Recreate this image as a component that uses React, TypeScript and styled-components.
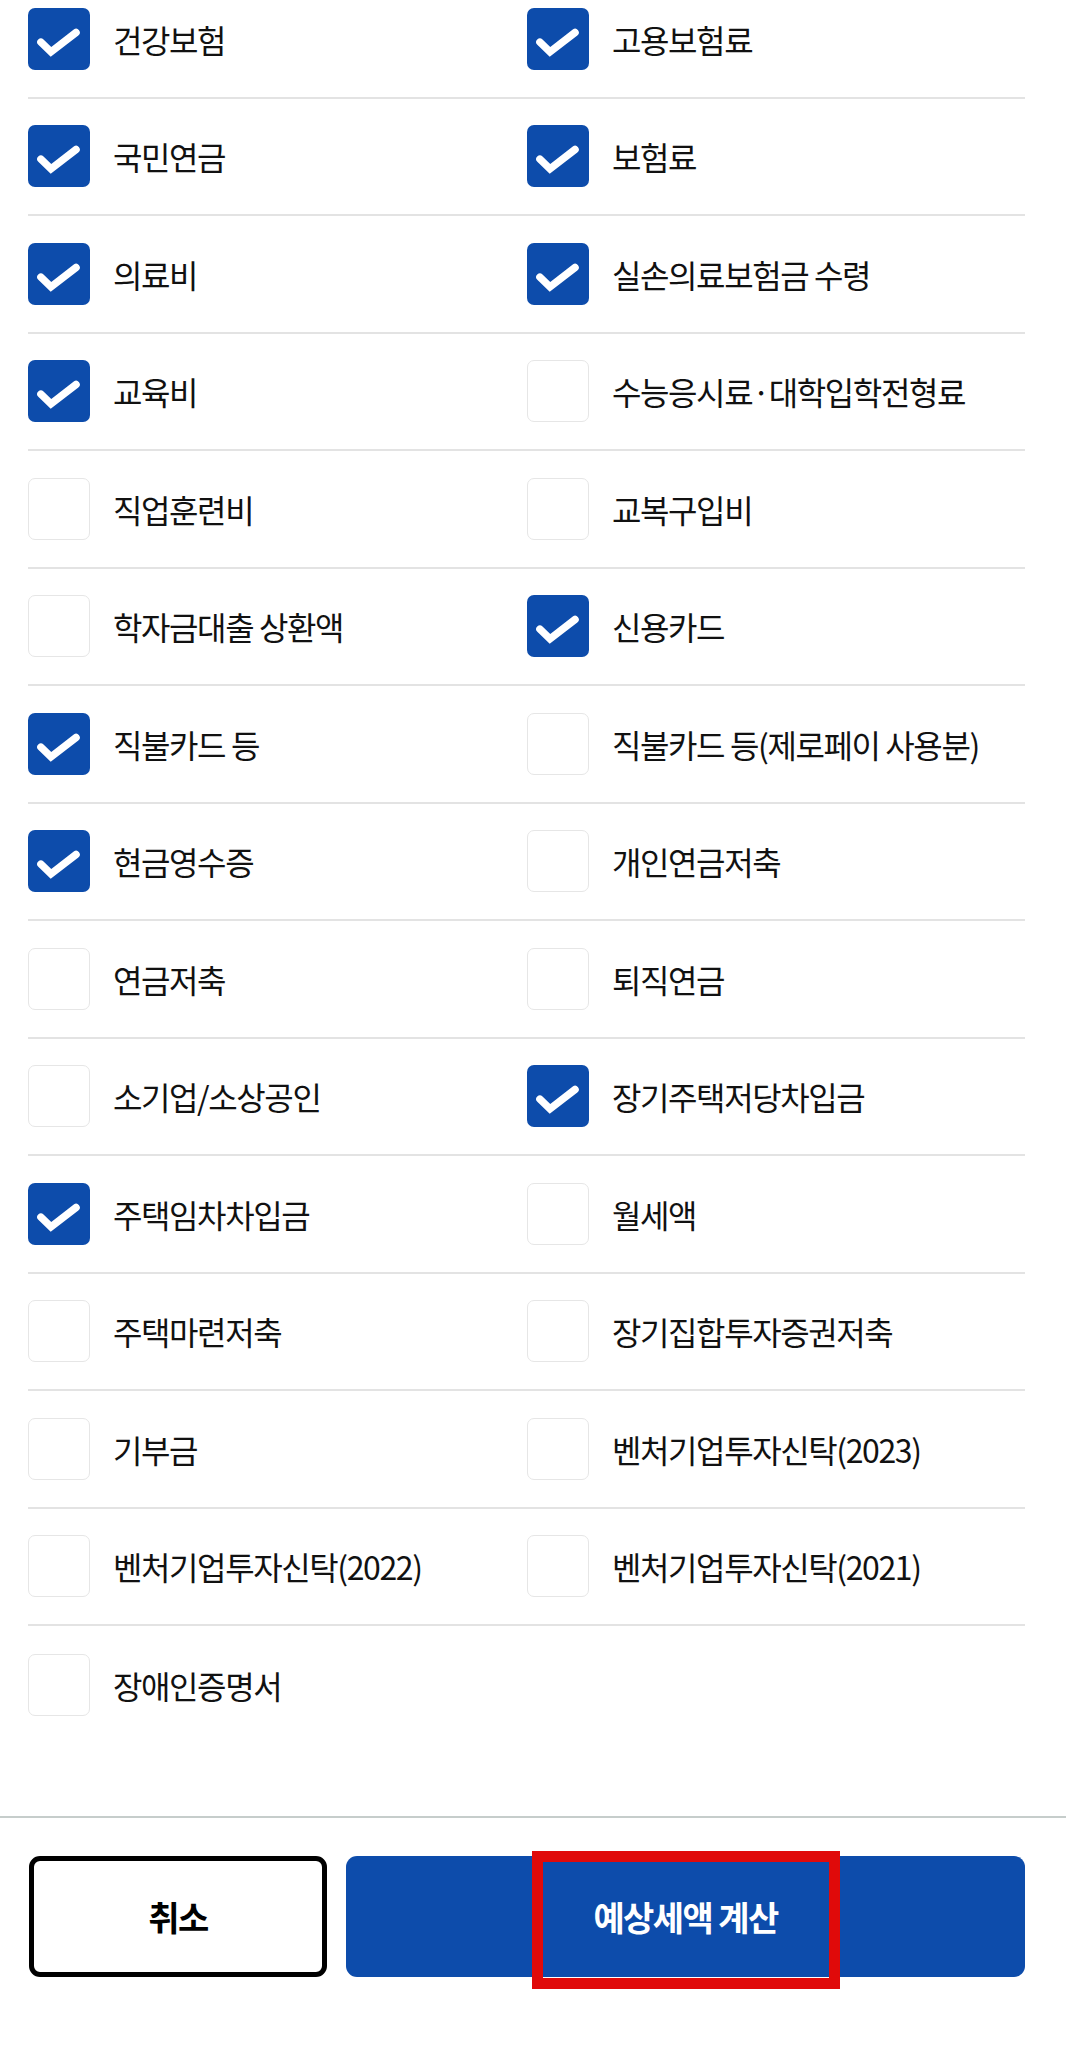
import styled, { createGlobalStyle } from 'styled-components';

type Deduction = { label: string; checked: boolean };

const ROWS: Deduction[][] = [
  [{ label: '건강보험', checked: true }, { label: '고용보험료', checked: true }],
  [{ label: '국민연금', checked: true }, { label: '보험료', checked: true }],
  [{ label: '의료비', checked: true }, { label: '실손의료보험금 수령', checked: true }],
  [{ label: '교육비', checked: true }, { label: '수능응시료·대학입학전형료', checked: false }],
  [{ label: '직업훈련비', checked: false }, { label: '교복구입비', checked: false }],
  [{ label: '학자금대출 상환액', checked: false }, { label: '신용카드', checked: true }],
  [{ label: '직불카드 등', checked: true }, { label: '직불카드 등(제로페이 사용분)', checked: false }],
  [{ label: '현금영수증', checked: true }, { label: '개인연금저축', checked: false }],
  [{ label: '연금저축', checked: false }, { label: '퇴직연금', checked: false }],
  [{ label: '소기업/소상공인', checked: false }, { label: '장기주택저당차입금', checked: true }],
  [{ label: '주택임차차입금', checked: true }, { label: '월세액', checked: false }],
  [{ label: '주택마련저축', checked: false }, { label: '장기집합투자증권저축', checked: false }],
  [{ label: '기부금', checked: false }, { label: '벤처기업투자신탁(2023)', checked: false }],
  [{ label: '벤처기업투자신탁(2022)', checked: false }, { label: '벤처기업투자신탁(2021)', checked: false }],
  [{ label: '장애인증명서', checked: false }],
];

const GlobalStyle = createGlobalStyle`
  html, body {
    margin: 0;
    padding: 0;
    background: #fff;
  }
  body {
    font-family: "Noto Sans CJK KR", "Noto Sans", sans-serif;
    color: #111;
    overflow: hidden;
  }
`;

const CheckIcon = () => (
  <svg width="62" height="62" viewBox="0 0 24 24" fill="none">
    <path
      d="M5 13.2 L8.9 17 L18.6 9.5"
      stroke="#fff"
      strokeWidth="2.9"
      strokeLinecap="round"
      strokeLinejoin="miter"
    />
  </svg>
);

const App = (): JSX.Element => {
  return (
    <Page>
      <GlobalStyle />
      <List>
        {ROWS.map((row, i) => (
          <Row key={i} $last={i === ROWS.length - 1}>
            {row.map(item => (
              <Item key={item.label}>
                <Box $checked={item.checked}>{item.checked && <CheckIcon />}</Box>
                <Label>{item.label}</Label>
              </Item>
            ))}
          </Row>
        ))}
      </List>

      <Footer>
        <CancelButton type="button">취소</CancelButton>
        <PrimaryButton type="button">
          예상세액 계산
          <Highlight />
        </PrimaryButton>
      </Footer>
    </Page>
  );
};

export default App;

const Page = styled.div`
  width: 1066px;
  height: 2060px;
  overflow: hidden;
  background: #fff;
`;

const List = styled.div`
  margin: -19px 0 0 28px;
  width: 997px;
`;

const Row = styled.div<{ $last: boolean }>`
  display: grid;
  grid-template-columns: 499px 1fr;
  align-items: center;
  height: 117.5px;
  box-sizing: border-box;
  border-bottom: ${p => (p.$last ? 'none' : '2px solid #e3e3e3')};
`;

const Item = styled.div`
  display: flex;
  align-items: center;
  gap: 23px;
`;

const Box = styled.div<{ $checked: boolean }>`
  display: flex;
  align-items: center;
  justify-content: center;
  flex-shrink: 0;
  width: 62px;
  height: 62px;
  box-sizing: border-box;
  border-radius: 7px;
  background: ${p => (p.$checked ? '#0d4cab' : '#fff')};
  border: ${p => (p.$checked ? 'none' : '1.5px solid #e6e6e6')};
`;

const Label = styled.span`
  font-size: 32px;
  letter-spacing: -1.4px;
  line-height: 1;
  color: #111;
  white-space: nowrap;
`;

const Footer = styled.div`
  display: flex;
  gap: 19px;
  margin-top: 72px;
  padding: 38px 41px 0 29px;
  border-top: 2px solid #c6cdcb;
`;

const BaseButton = styled.button`
  display: flex;
  align-items: center;
  justify-content: center;
  height: 121px;
  box-sizing: border-box;
  border-radius: 11px;
  font-family: "Noto Sans CJK KR", "Noto Sans", sans-serif;
  font-size: 34px;
  font-weight: 700;
  letter-spacing: -1.6px;
  cursor: pointer;
`;

const CancelButton = styled(BaseButton)`
  width: 298px;
  background: #fff;
  color: #000;
  border: 5px solid #000;
`;

const PrimaryButton = styled(BaseButton)`
  position: relative;
  flex: 1;
  background: #0d4cab;
  color: #fff;
  border: none;
`;

const Highlight = styled.span`
  position: absolute;
  left: 186px;
  top: -5px;
  width: 308px;
  height: 138px;
  box-sizing: border-box;
  border: 11px solid #e00a0a;
  pointer-events: none;
`;
